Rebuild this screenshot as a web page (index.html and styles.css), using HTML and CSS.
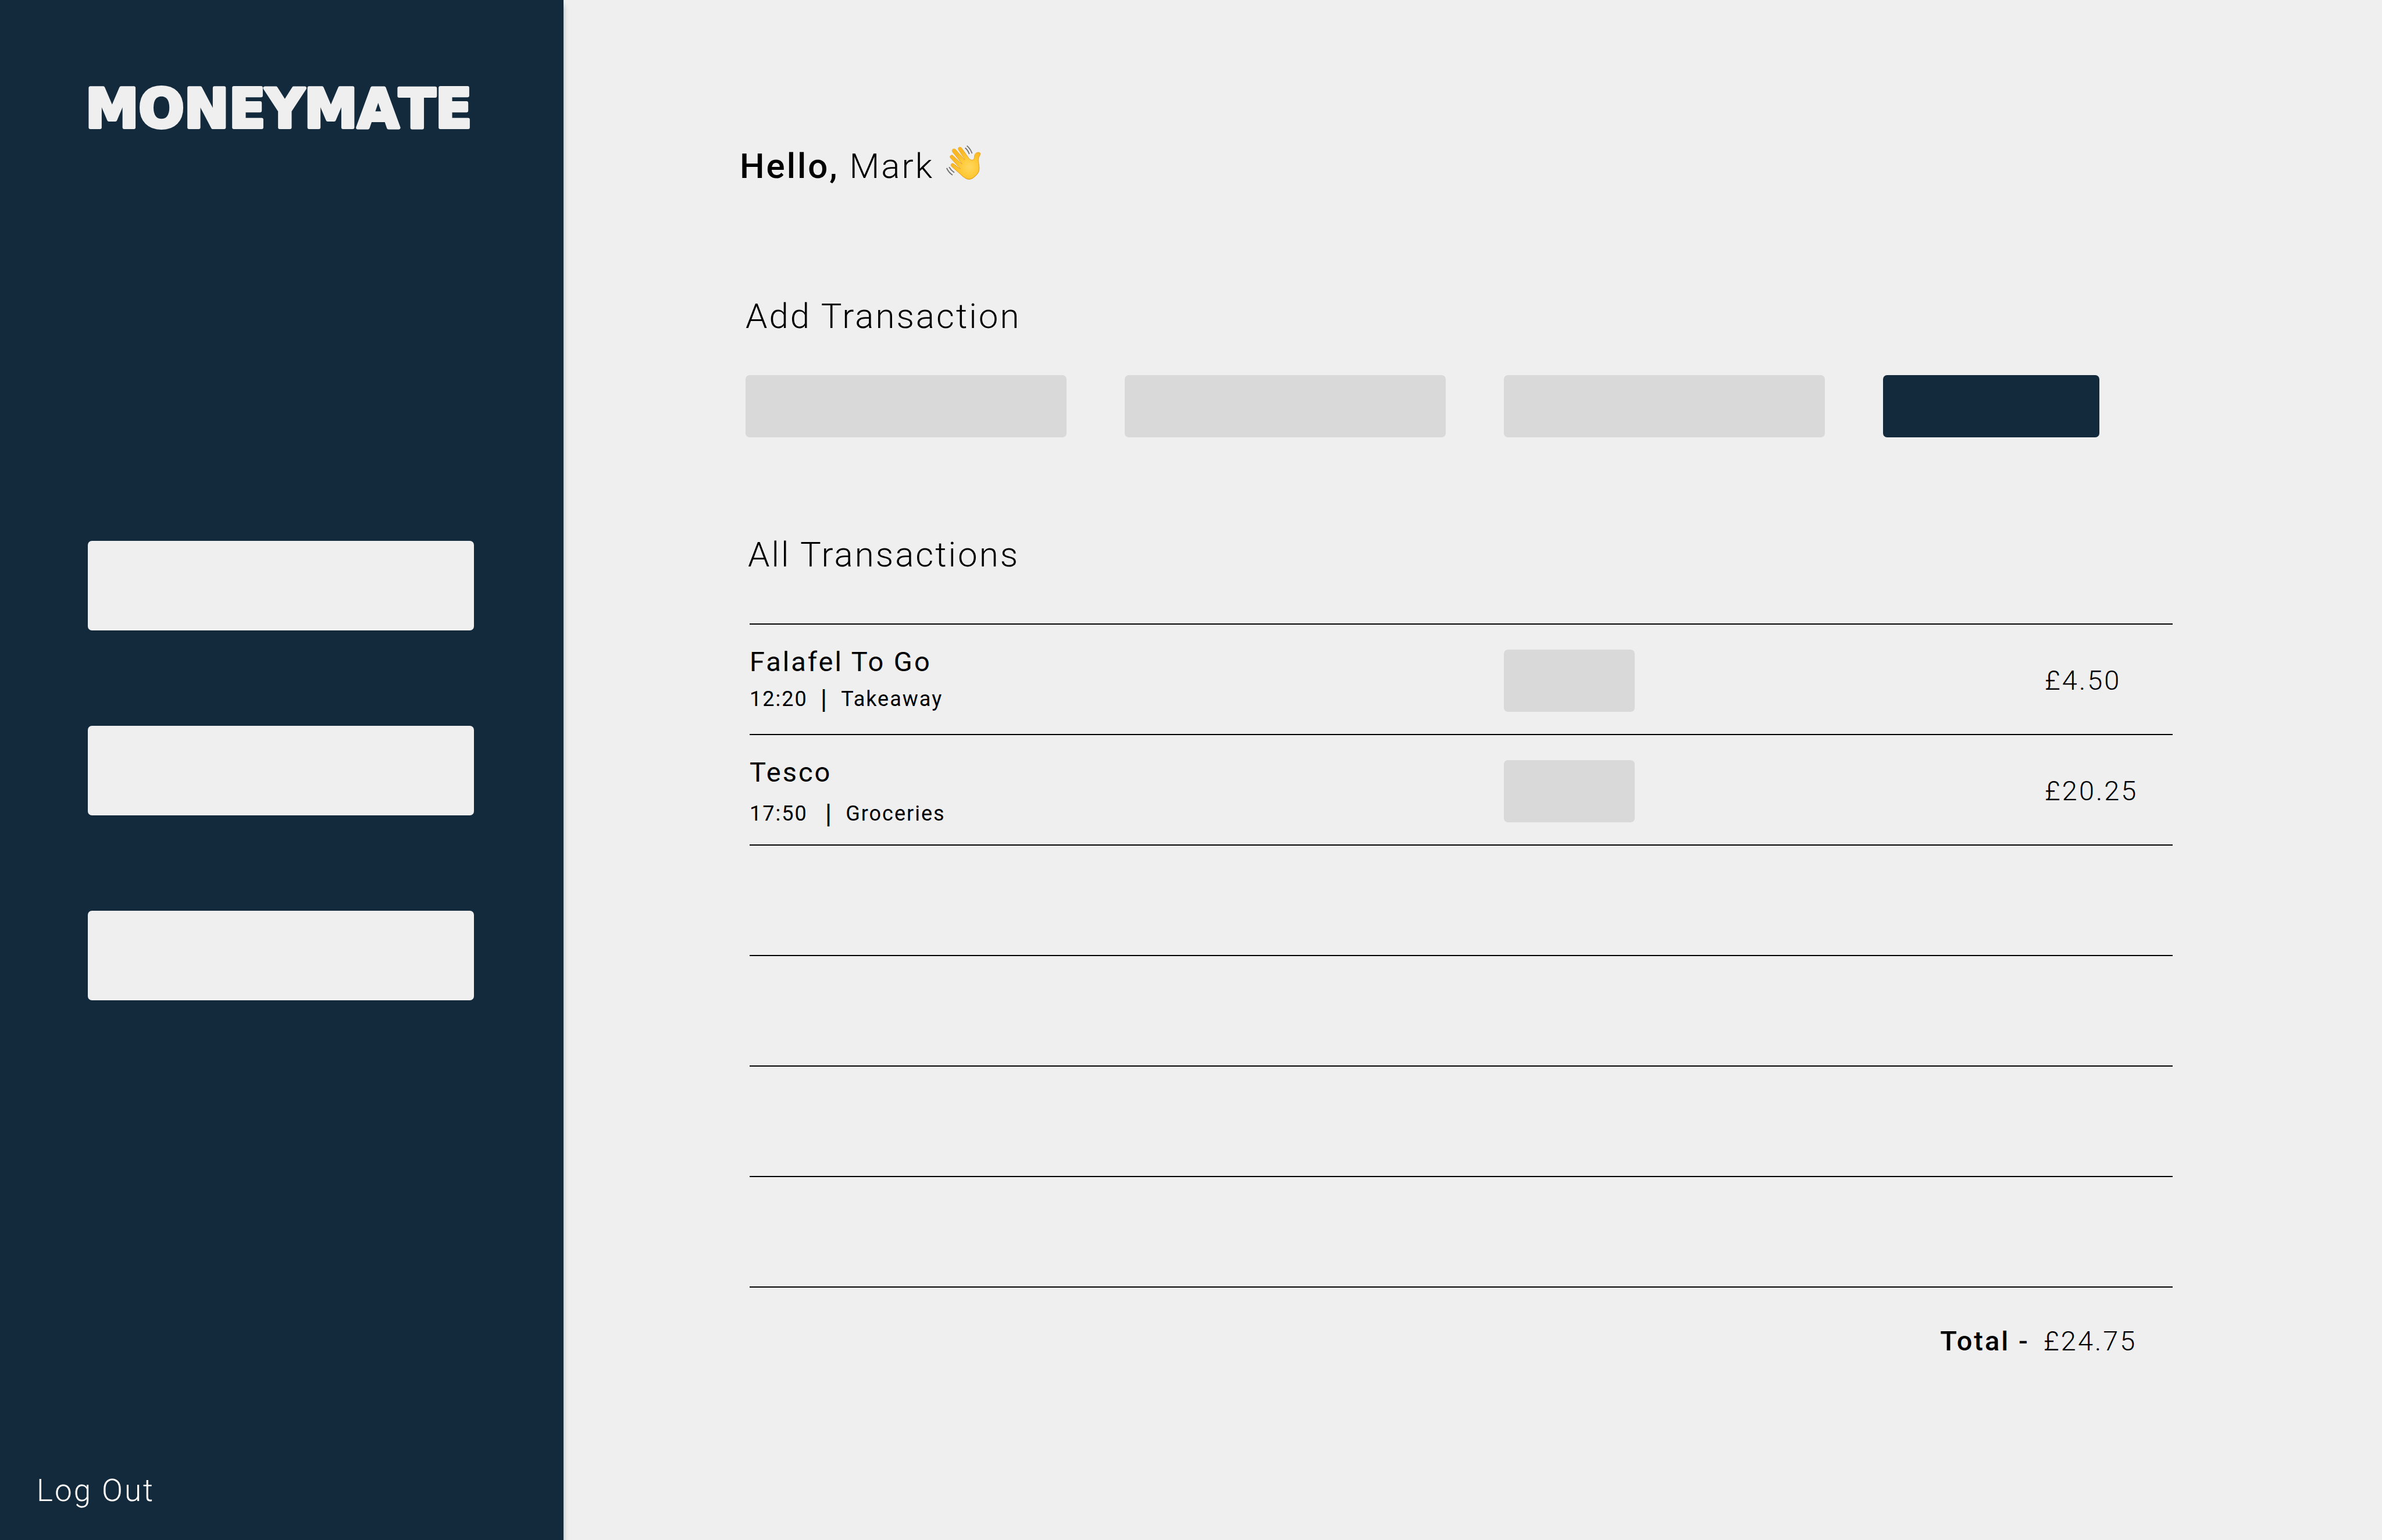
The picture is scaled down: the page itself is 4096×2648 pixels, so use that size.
FILE: index.html
```html
<!DOCTYPE html>
<html lang="en">
<head>
<meta charset="utf-8">
<title>MoneyMate</title>
<link rel="stylesheet" href="styles.css">
</head>
<body>
<div class="app">
  <aside class="sidebar">
    <svg class="logo" viewBox="0 0 664 74" role="img" aria-label="MoneyMate">
      <text class="logo-text" x="-4" y="70">MONEYMATE</text>
    </svg>
    <nav class="menu" aria-label="Main">
      <button class="menu-button" type="button" aria-label="Overview"></button>
      <button class="menu-button" type="button" aria-label="Transactions"></button>
      <button class="menu-button" type="button" aria-label="Settings"></button>
    </nav>
    <a class="logout" href="#">Log Out</a>
  </aside>

  <main class="content">
    <h1 class="greeting"><span><b class="strong">Hello,</b> Mark</span>
      <svg class="wave" viewBox="0 0 100 100" aria-hidden="true">
        <defs>
          <radialGradient id="skin" cx="68" cy="62" r="48" gradientUnits="userSpaceOnUse">
            <stop offset="0" stop-color="#ffd75e"/>
            <stop offset=".6" stop-color="#ffc833"/>
            <stop offset="1" stop-color="#f9b823"/>
          </radialGradient>
          <linearGradient id="edge" x1="0" y1="0" x2="0.3" y2="1">
            <stop offset="0" stop-color="#f3b02a"/>
            <stop offset="1" stop-color="#d98704"/>
          </linearGradient>
        </defs>
        <path d="M54 92 C50 90 46 86 43 83 L17 60 C14 57 15 52 20 52 C22 52 24 53 26 55 L41 67 C42 68 43 67 42 66 L14 36 C11 32 14 28 18 28 C20 28 21 29 23 31 L46 53 C47 54 48 53 47 52 L20 19 C17 14 20 10 24 10 C27 10 28 11 30 13 L54 41 C55 42 56 41 55 40 L37 13 C35 8 37 5 41 5 C44 5 46 7 47 9 L64 33 C68 40 74 44 79 41 C83 39 82 35 83 30 C84 24 88 20 94 20 C99 20 101 23 99 27 C95 34 93 38 94 46 C96 58 98 69 94 77 C90 85 82 91 76 95 C68 99 60 97 54 92Z" fill="url(#skin)" stroke="url(#edge)" stroke-width="1.5" stroke-linejoin="round"/>
        <path class="motion" d="M61 1Q71 9 76 23M56 7Q64 13 68 25M3 65Q9 78 20 85M10 62Q16 72 25 78"/>
      </svg>
    </h1>

    <section class="section-add">
      <h2 class="heading">Add Transaction</h2>
      <form class="add-form">
        <input class="field" type="text" aria-label="Name">
        <input class="field" type="text" aria-label="Category">
        <input class="field" type="text" aria-label="Amount">
        <button class="submit" type="button" aria-label="Add"></button>
      </form>
    </section>

    <section class="section-list">
      <h2 class="heading">All Transactions</h2>
      <div class="ledger">
        <table class="transactions">
          <tbody>
            <tr>
              <td class="name-cell">
                <div class="name">Falafel To Go</div>
                <div class="meta"><span>12:20</span><span class="bar">|</span><span>Takeaway</span></div>
              </td>
              <td class="tag-cell"><button class="tag" type="button" aria-label="Edit Falafel To Go"></button></td>
              <td class="amount">£4.50</td>
            </tr>
            <tr>
              <td class="name-cell">
                <div class="name">Tesco</div>
                <div class="meta meta-loose"><span class="time">17:50</span><span class="bar">|</span><span>Groceries</span></div>
              </td>
              <td class="tag-cell"><button class="tag" type="button" aria-label="Edit Tesco"></button></td>
              <td class="amount">£20.25</td>
            </tr>
            <tr><td></td><td></td><td></td></tr>
            <tr><td></td><td></td><td></td></tr>
            <tr><td></td><td></td><td></td></tr>
            <tr><td></td><td></td><td></td></tr>
          </tbody>
        </table>
        <p class="total"><b class="strong">Total -</b><span class="total-value">£24.75</span></p>
      </div>
    </section>
  </main>
</div>
</body>
</html>
```
FILE: styles.css
```css
* {
  box-sizing: border-box;
}

body {
  margin: 0;
  background: #efefef;
  color: #000;
  font-family: Roboto, "Liberation Sans", sans-serif;
  font-weight: 300;
}

h1, h2, p {
  margin: 0;
  font-weight: 300;
}

button, input {
  display: block;
  border: 0;
  padding: 0;
  font: inherit;
}

.strong {
  font-weight: 500;
}

.app {
  display: flex;
  min-height: 100vh;
}

/* Sidebar */

.sidebar {
  flex: 0 0 969px;
  display: flex;
  flex-direction: column;
  padding: 149px 154px 55px 151px;
  background: #132a3d;
  box-shadow: 0 9px 9px rgba(0, 0, 0, 0.25);
}

.logo {
  display: block;
  width: 100%;
  overflow: visible;
}

.logo-text {
  font: 700 92px "DejaVu Sans", sans-serif;
  font-kerning: none;
  fill: #efefef;
  stroke: #efefef;
  stroke-width: 6px;
  stroke-linejoin: round;
}

.menu {
  display: grid;
  gap: 164px;
  margin-top: 707px;
}

.menu-button {
  height: 154px;
  border-radius: 7px;
  background: #efefef;
}

.logout {
  margin: auto 0 0 -88px;
  color: #fff;
  font-size: 53px;
  line-height: 60px;
  letter-spacing: 3px;
  text-decoration: none;
}

/* Content */

.content {
  flex: 1;
  padding: 250px 360px 0 303px;
}

.greeting {
  display: flex;
  align-items: center;
  gap: 20px;
  font-size: 60px;
  line-height: 72px;
  letter-spacing: 3px;
}

.wave {
  width: 60px;
  height: 60px;
  margin-bottom: 12px;
  overflow: visible;
}

.motion {
  fill: none;
  stroke: #707070;
  stroke-width: 3;
}

.heading {
  font-size: 60px;
  line-height: 72px;
  letter-spacing: 3px;
}

.section-add {
  margin: 186px 0 0 10px;
}

.add-form {
  display: grid;
  grid-template-columns: 552fr 552fr 552fr 372fr;
  gap: 100px;
  margin: 65px 126px 0 0;
}

.field,
.submit {
  width: 100%;
  height: 107px;
  border-radius: 7px;
  background: #d9d9d9;
}

.submit {
  background: #132a3d;
}

.section-list {
  margin: 166px 0 0 14px;
}

.ledger {
  padding: 82px 0 0 3px;
}

.transactions {
  width: 100%;
  border-collapse: collapse;
  border-top: 2px solid #000;
  table-layout: fixed;
}

.transactions tr {
  height: 190px;
  border-bottom: 2px solid #000;
}

.transactions td {
  padding: 4px 0 0;
}

.transactions .name-cell {
  width: 1297px;
  padding-top: 36px;
  font-weight: 400;
  vertical-align: top;
}

.name {
  font-size: 47px;
  line-height: 56px;
  letter-spacing: 3px;
}

.meta {
  display: flex;
  align-items: center;
  gap: 22px;
  padding-top: 8px;
  font-size: 36px;
  line-height: 56px;
  letter-spacing: 2px;
}

.meta-loose {
  padding-top: 15px;
}

.meta-loose .time {
  padding-right: 8px;
}

.bar {
  font-size: 47px;
}

.tag {
  width: 225px;
  height: 107px;
  border-radius: 7px;
  background: #d9d9d9;
}

.amount {
  width: 220px;
  font-size: 47px;
  line-height: 56px;
  letter-spacing: 3px;
}

.total {
  display: flex;
  justify-content: flex-end;
  gap: 24px;
  padding-top: 64px;
  font-size: 47px;
  line-height: 56px;
  letter-spacing: 3px;
}

.total-value {
  width: 222px;
}
```
